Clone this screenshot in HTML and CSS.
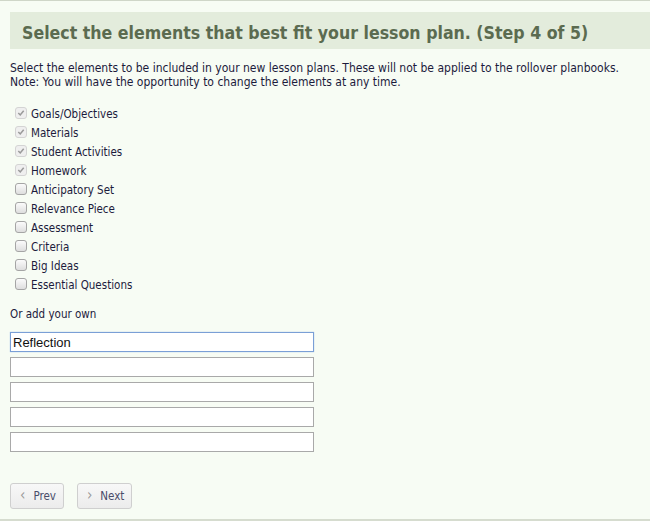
FILE: index.html
```html
<!DOCTYPE html>
<html>
<head>
<meta charset="utf-8">
<link rel="stylesheet" href="styles.css">
</head>
<body>
<div class="page">
  <div class="title">Select the elements that best fit your lesson plan. (Step 4 of 5)</div>
  <div class="intro">
    <div>Select the elements to be included in your new lesson plans. These will not be applied to the rollover planbooks.</div>
    <div>Note: You will have the opportunity to change the elements at any time.</div>
  </div>
  <ul class="elements">
    <li><span class="box checked"><svg viewBox="0 0 13 13" width="13" height="13"><path d="M3 6.5 L5.5 9 L10 3.5" fill="none" stroke="#9a9a9a" stroke-width="2"/></svg></span><span>Goals/Objectives</span></li>
    <li><span class="box checked"><svg viewBox="0 0 13 13" width="13" height="13"><path d="M3 6.5 L5.5 9 L10 3.5" fill="none" stroke="#9a9a9a" stroke-width="2"/></svg></span><span>Materials</span></li>
    <li><span class="box checked"><svg viewBox="0 0 13 13" width="13" height="13"><path d="M3 6.5 L5.5 9 L10 3.5" fill="none" stroke="#9a9a9a" stroke-width="2"/></svg></span><span>Student Activities</span></li>
    <li><span class="box checked"><svg viewBox="0 0 13 13" width="13" height="13"><path d="M3 6.5 L5.5 9 L10 3.5" fill="none" stroke="#9a9a9a" stroke-width="2"/></svg></span><span>Homework</span></li>
    <li><span class="box"></span><span>Anticipatory Set</span></li>
    <li><span class="box"></span><span>Relevance Piece</span></li>
    <li><span class="box"></span><span>Assessment</span></li>
    <li><span class="box"></span><span>Criteria</span></li>
    <li><span class="box"></span><span>Big Ideas</span></li>
    <li><span class="box"></span><span>Essential Questions</span></li>
  </ul>
  <div class="own-label">Or add your own</div>
  <div class="own">
    <input class="own-input focus" type="text" value="Reflection">
    <input class="own-input" type="text">
    <input class="own-input" type="text">
    <input class="own-input" type="text">
    <input class="own-input" type="text">
  </div>
  <div class="nav">
    <button class="btn"><span class="chev">&lsaquo;</span>Prev</button>
    <button class="btn"><span class="chev">&rsaquo;</span>Next</button>
  </div>
</div>
</body>
</html>
```
FILE: styles.css
```css
html, body {
  margin: 0;
  padding: 0;
}
body {
  background: #f7fcf4;
  width: 650px;
  height: 521px;
  box-sizing: border-box;
  border-top: 1px solid #cfd6c8;
  border-bottom: 2px solid #d6dccf;
  font-family: "DejaVu Sans Condensed", "DejaVu Sans", sans-serif;
  font-size: 12px;
  color: #1c1b3c;
  overflow: hidden;
}
.page {
  padding: 11px 0 0 10px;
}
.title {
  background: #e3ecdc;
  height: 37px;
  line-height: 43px;
  padding-left: 12px;
  font-weight: bold;
  font-size: 17.6px;
  color: #5b6b50;
}
.intro {
  margin-top: 13px;
  line-height: 13.5px;
  font-size: 12px;
}
.elements {
  list-style: none;
  margin: 15px 0 0 0;
  padding: 0;
}
.elements li {
  display: flex;
  align-items: center;
  height: 19px;
}
.box {
  width: 12px;
  height: 12px;
  box-sizing: border-box;
  margin: 0 4px 0 5px;
  border: 1px solid #a5a5a5;
  border-radius: 3px;
  background: linear-gradient(#fbfbfb, #dedede);
  display: flex;
  align-items: center;
  justify-content: center;
  position: relative;
  top: -1px;
}
.box.checked {
  border-color: #d4d4d4;
  background: #efefef;
}
.box svg {
  width: 10px;
  height: 10px;
  flex: none;
}
.elements li span:last-child {
  font-size: 11.5px;
}
.own-label {
  margin-top: 13px;
  font-size: 11.5px;
  height: 13px;
}
.own {
  margin-top: 12px;
  display: flex;
  flex-direction: column;
  gap: 5px;
}
.own-input {
  width: 304px;
  height: 20px;
  box-sizing: border-box;
  border: 1px solid #a9a9a9;
  background: #fff;
  margin: 0;
  padding: 0 2px;
  font-family: "Liberation Sans", Arial, sans-serif;
  font-size: 13px;
  color: #111;
  outline: none;
}
.own-input.focus {
  border-color: #7a9fd6;
  box-shadow: 0 0 1px #9bbbe8;
}
.nav {
  margin-top: 31px;
  display: flex;
  gap: 13px;
}
.btn {
  height: 26px;
  box-sizing: border-box;
  border: 1px solid #cfcfcf;
  border-radius: 3px;
  background: linear-gradient(#f8f8f8, #ececec);
  padding: 0 7px 0 9px;
  font-family: "DejaVu Sans Condensed", "DejaVu Sans", sans-serif;
  font-size: 11.5px;
  color: #4a4d6a;
  display: flex;
  align-items: center;
}
.chev {
  color: #999;
  font-size: 15px;
  margin-right: 8px;
  line-height: 12px;
  position: relative;
  top: -1px;
}
```
